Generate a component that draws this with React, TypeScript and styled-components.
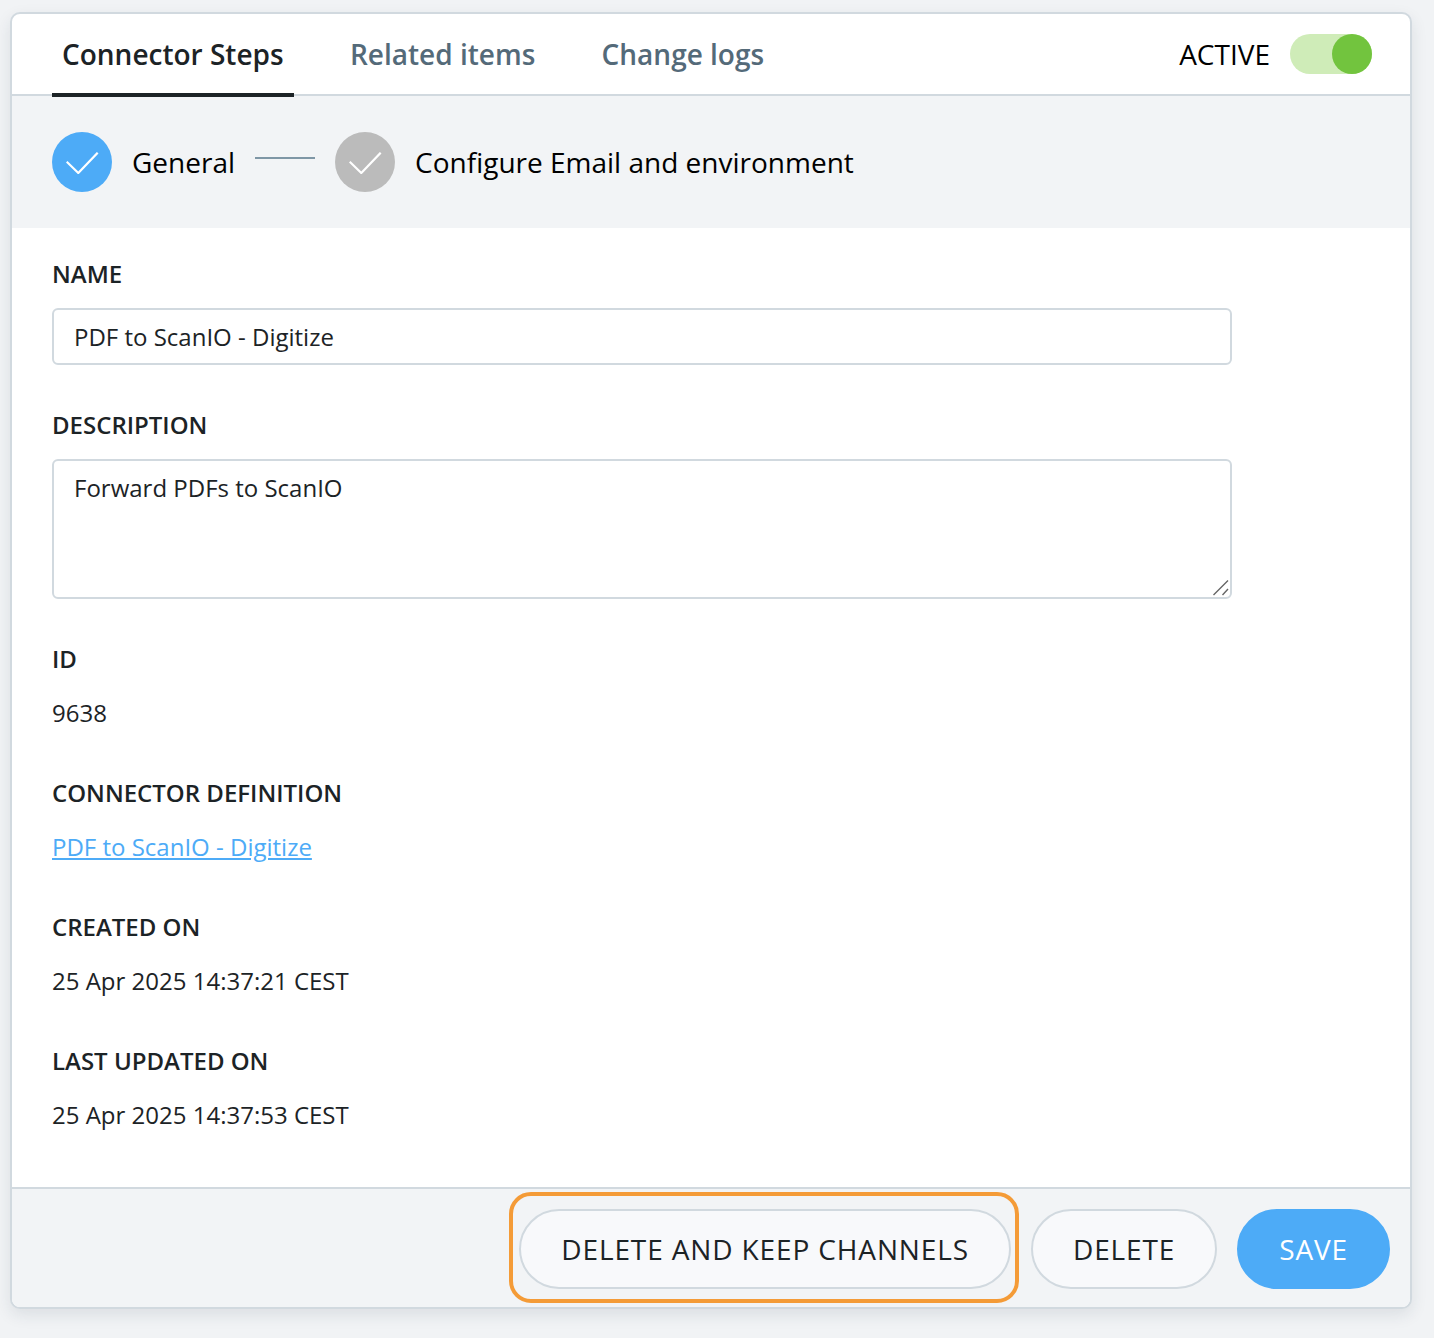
import React from 'react'
import styled, { createGlobalStyle } from 'styled-components'

const GlobalStyle = createGlobalStyle`
	html, body {
		margin: 0;
		padding: 0;
		background: #f1f3f5;
		font-family: 'Open Sans', sans-serif;
		color: #1c2326;
	}
	* {
		box-sizing: border-box;
	}
`

const CheckIcon = () => (
	<svg width="33" height="22" viewBox="0 0 33 22" fill="none">
		<path d="M0.7 9.7 L12.3 21 L31.7 0.7" stroke="#fff" strokeWidth="2.2" />
	</svg>
)

const App = () => {
	return (
		<Page>
			<GlobalStyle />
			<Card>
				<TabBar>
					<Tabs>
						<Tab $active>Connector Steps</Tab>
						<Tab>Related items</Tab>
						<Tab>Change logs</Tab>
					</Tabs>
					<ActiveToggle>
						<ActiveLabel>ACTIVE</ActiveLabel>
						<Track>
							<Knob />
						</Track>
					</ActiveToggle>
				</TabBar>
				<Stepper>
					<StepCircle $done>
						<CheckIcon />
					</StepCircle>
					<StepLabel>General</StepLabel>
					<StepLine />
					<StepCircle>
						<CheckIcon />
					</StepCircle>
					<StepLabel>Configure Email and environment</StepLabel>
				</Stepper>
				<Form>
					<Label>NAME</Label>
					<TextInput defaultValue="PDF to ScanIO - Digitize" />
					<Label $top={44}>DESCRIPTION</Label>
					<TextAreaWrap>
						<TextArea defaultValue="Forward PDFs to ScanIO" />
						<ResizeGrip width="16" height="16" viewBox="0 0 16 16">
							<path d="M0.5 15 L15 0.5 M9.5 15 L15 9" stroke="#666" strokeWidth="1.4" />
						</ResizeGrip>
					</TextAreaWrap>
					<Label $top={44}>ID</Label>
					<Value>9638</Value>
					<Label $top={48}>CONNECTOR DEFINITION</Label>
					<Value>
						<ValueLink href="#">PDF to ScanIO - Digitize</ValueLink>
					</Value>
					<Label $top={48}>CREATED ON</Label>
					<Value>25 Apr 2025 14:37:21 CEST</Value>
					<Label $top={48}>LAST UPDATED ON</Label>
					<Value>25 Apr 2025 14:37:53 CEST</Value>
				</Form>
				<Footer>
					<HighlightWrap>
						<Button>DELETE AND KEEP CHANNELS</Button>
						<Highlight />
					</HighlightWrap>
					<Button>DELETE</Button>
					<SaveButton>SAVE</SaveButton>
				</Footer>
			</Card>
		</Page>
	)
}

const Page = styled.div`
	width: 1434px;
	height: 1338px;
	padding: 12px 23px 0 10px;
	overflow: hidden;
`
const Card = styled.div`
	width: 1402px;
	height: 1297px;
	display: flex;
	flex-direction: column;
	background: #fff;
	border: 2px solid #d1d9df;
	border-radius: 10px;
	box-shadow: 0 6px 16px rgba(30, 50, 70, 0.1);
	overflow: hidden;
`
const TabBar = styled.div`
	position: relative;
	z-index: 1;
	flex: 0 0 82px;
	min-height: 0;
	display: flex;
	justify-content: space-between;
	align-items: center;
	padding: 0 38px 0 40px;
	border-bottom: 2px solid #d1d9df;
`
const Tabs = styled.div`
	display: flex;
	align-self: flex-start;
	gap: 46.3px;
`
const Tab = styled.div<{ $active?: boolean }>`
	height: 83px;
	padding: 20px 10px 0;
	font-size: 28px;
	line-height: 40px;
	font-weight: 600;
	color: ${(p) => (p.$active ? '#1c2326' : '#546a79')};
	border-bottom: 4px solid ${(p) => (p.$active ? '#1c2326' : 'transparent')};
`
const ActiveToggle = styled.div`
	display: flex;
	align-items: center;
	gap: 20px;
`
const ActiveLabel = styled.span`
	font-size: 28px;
	color: #000;
`
const Track = styled.div`
	width: 82px;
	height: 40px;
	display: flex;
	justify-content: flex-end;
	background: #cfecb8;
	border-radius: 20px;
`
const Knob = styled.div`
	width: 40px;
	height: 40px;
	background: #72c43e;
	border-radius: 50%;
`
const Stepper = styled.div`
	flex: 0 0 132px;
	display: flex;
	align-items: flex-start;
	padding: 36px 40px 0;
	background: #f2f4f6;
`
const StepCircle = styled.div<{ $done?: boolean }>`
	width: 60px;
	height: 60px;
	display: flex;
	align-items: center;
	justify-content: center;
	padding-top: 2px;
	border-radius: 50%;
	background: ${(p) => (p.$done ? '#4dabf7' : '#bbbbbb')};
`
const StepLabel = styled.span`
	margin-left: 20px;
	font-size: 28px;
	line-height: 60px;
	color: #000;
`
const StepLine = styled.div`
	width: 60px;
	height: 2px;
	margin: 25px 20px 0;
	background: #7f97a6;
`
const Form = styled.div`
	flex: 1 1 auto;
	display: flex;
	flex-direction: column;
	align-items: flex-start;
	padding: 30px 40px 0;
`
const Label = styled.label<{ $top?: number }>`
	margin-top: ${(p) => p.$top ?? 0}px;
	font-size: 24px;
	line-height: 32px;
	font-weight: 600;
	color: #1c2326;
`
const TextInput = styled.input`
	width: 1180px;
	height: 57px;
	margin-top: 18px;
	padding: 0 20px;
	font: 400 24px 'Open Sans', sans-serif;
	color: #1c2326;
	background: #fff;
	border: 2px solid #d1d9df;
	border-radius: 6px;
	outline: none;
`
const TextAreaWrap = styled.div`
	position: relative;
	width: 1180px;
	height: 140px;
	margin-top: 18px;
`
const TextArea = styled.textarea`
	display: block;
	width: 100%;
	height: 100%;
	padding: 11px 20px;
	font: 400 24px/1.3 'Open Sans', sans-serif;
	color: #1c2326;
	background: #fff;
	border: 2px solid #d1d9df;
	border-radius: 6px;
	outline: none;
	resize: none;
`
const ResizeGrip = styled.svg`
	position: absolute;
	right: 3px;
	bottom: 3px;
`
const Value = styled.div`
	margin-top: 22px;
	font-size: 24px;
	line-height: 32px;
	color: #1c2326;
`
const ValueLink = styled.a`
	color: #4dabf7;
`
const Footer = styled.div`
	flex: 0 0 120px;
	display: flex;
	justify-content: flex-end;
	align-items: flex-start;
	gap: 20px;
	padding: 20px 20px 0;
	background: #f2f4f6;
	border-top: 2px solid #d1d9df;
`
const HighlightWrap = styled.div`
	position: relative;
`
const Highlight = styled.div`
	position: absolute;
	top: -17px;
	left: -10px;
	right: -8px;
	bottom: -14px;
	border: 4px solid #f49b37;
	border-radius: 22px;
	pointer-events: none;
`
const Button = styled.button`
	height: 80px;
	padding: 0 40px;
	font: 500 28px 'Open Sans', sans-serif;
	letter-spacing: 0.87px;
	color: #1c2326;
	background: #f8f9fb;
	border: 2px solid #d1d9df;
	border-radius: 40px;
`
const SaveButton = styled(Button)`
	color: #fff;
	background: #4dabf7;
	border-color: #4dabf7;
`

export default App
